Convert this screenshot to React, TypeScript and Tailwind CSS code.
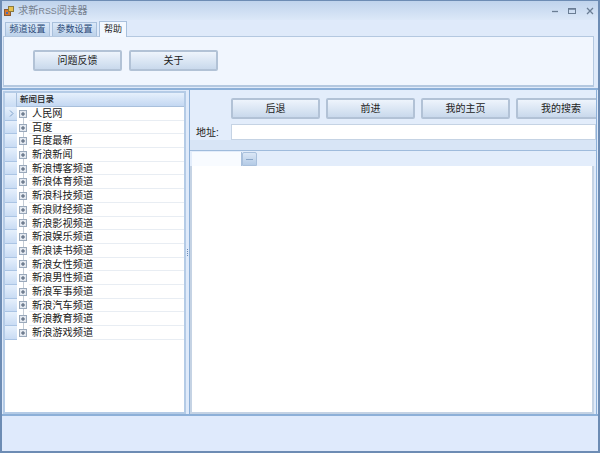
import React from 'react';

const font = { fontFamily: '"Liberation Sans", "Noto Sans CJK SC", sans-serif' };

const feeds = [
  '人民网', '百度', '百度最新', '新浪新闻', '新浪博客频道', '新浪体育频道', '新浪科技频道', '新浪财经频道',
  '新浪影视频道', '新浪娱乐频道', '新浪读书频道', '新浪女性频道', '新浪男性频道', '新浪军事频道', '新浪汽车频道',
  '新浪教育频道', '新浪游戏频道',
];

function RibbonButton({ label, width }: { label: string; width: string }) {
  return (
    <div className={`${width} h-[21px] shrink-0 flex items-center justify-center rounded-[2px] border-2 border-[#b2c2d6] bg-gradient-to-b from-[#eef4fc] to-[#c9d9ec] text-[10px] text-[#222]`}>
      {label}
    </div>
  );
}

function ExpandBox() {
  return (
    <svg width="8" height="8" viewBox="0 0 8 8" className="shrink-0">
      <rect x="0.5" y="0.5" width="7" height="7" fill="#e4e9f0" stroke="#9aa9bb" />
      <path d="M2 4h4M4 2v4" stroke="#4a5a70" />
    </svg>
  );
}

function FeedRow({ name, index }: { name: string; index: number }) {
  const isFirst = index === 0;
  const isLast = index === feeds.length - 1;
  return (
    <div className="flex h-[13.7px]">
      <div className="w-[12px] shrink-0 flex items-center justify-center border-b border-[#aac4e4] bg-gradient-to-b from-[#e6f0fc] to-[#c9dcf4]">
        {isFirst && (
          <svg width="5" height="7" viewBox="0 0 5 7">
            <path d="M1 0.5 4 3.5 1 6.5" fill="none" stroke="#7d9fc8" />
          </svg>
        )}
      </div>
      <div className="relative w-[12px] shrink-0 flex items-center justify-center">
        {isFirst ? (
          <div className="absolute left-[6px] top-[7px] bottom-0 w-px bg-[#c4ccd6]" />
        ) : isLast ? (
          <div className="absolute left-[6px] top-0 h-[7px] w-px bg-[#c4ccd6]" />
        ) : (
          <div className="absolute left-[6px] top-0 bottom-0 w-px bg-[#c4ccd6]" />
        )}
        <div className="relative flex">
          <ExpandBox />
        </div>
      </div>
      <div className="w-[155px] border-b border-[#e8edf3] pl-[3px] text-[10.2px] leading-[13px] text-[#222] whitespace-nowrap">
        {name}
      </div>
    </div>
  );
}

export default function App() {
  return (
    <div className="w-[600px] h-[453px] flex flex-col overflow-hidden border-x-2 border-b-2 border-[#6d8cb4] bg-[#dfeafa]" style={font}>
      {/* title bar */}
      <div className="h-[20px] shrink-0 flex items-center bg-gradient-to-b from-[#bfd3ec] to-[#dce8f8] border-t border-[#6d8cb4] pl-[2px]">
        <svg width="10" height="10" viewBox="0 0 10 10" className="shrink-0">
          <rect x="0.5" y="3.5" width="6" height="6" fill="#d9782f" stroke="#8a5a30" />
          <rect x="4.5" y="0.5" width="5" height="5" fill="#e8c14e" stroke="#8a7a40" />
          <rect x="2" y="6" width="2" height="2" fill="#4a6fb0" />
        </svg>
        <span className="ml-[4px] text-[10.3px] text-[#76808e]">
          求新<span className="text-[8.8px]">RSS</span>阅读器
        </span>
        <div className="ml-auto flex items-center gap-[10px] pr-[4px] text-[#6a7d94]">
          <svg width="6" height="7" viewBox="0 0 6 7"><path d="M0 4.5h6" stroke="currentColor" strokeWidth="1.3" /></svg>
          <svg width="8" height="8" viewBox="0 0 8 8"><rect x="0.5" y="1.5" width="7" height="5" fill="none" stroke="currentColor" /><path d="M0 2h8" stroke="currentColor" strokeWidth="1.5" /></svg>
          <svg width="8" height="8" viewBox="0 0 8 8"><path d="M1 1 7 7M7 1 1 7" stroke="currentColor" strokeWidth="1.3" /></svg>
        </div>
      </div>

      {/* ribbon tabs */}
      <div className="h-[16px] shrink-0 flex items-end pl-[3px] gap-[2px]">
        <div className="h-[14px] w-[45px] flex items-center justify-center bg-gradient-to-b from-[#dbe8f8] to-[#bdd2ea] border border-b-0 border-[#a9c0dc] text-[9px] text-[#2b4a78]">频道设置</div>
        <div className="h-[14px] w-[45px] flex items-center justify-center bg-gradient-to-b from-[#dbe8f8] to-[#bdd2ea] border border-b-0 border-[#a9c0dc] text-[9px] text-[#2b4a78]">参数设置</div>
        <div className="relative z-10 h-[16px] w-[28px] -mb-px flex items-center justify-center bg-[#f3f8ff] border border-b-0 border-[#a9c0dc] text-[9px] text-[#222]">帮助</div>
      </div>
      <div className="h-[51px] shrink-0 ml-[1px] mr-[4px] flex items-center gap-[7px] pl-[29px] pb-[1px] bg-[#f1f6fe] border border-b-2 border-[#b4c8e0]">
        <RibbonButton label="问题反馈" width="w-[89px]" />
        <RibbonButton label="关于" width="w-[89px]" />
      </div>

      {/* main */}
      <div className="h-[326px] shrink-0 mt-[1px] flex border-t-2 border-[#8db0d8] pl-[1px] pr-[1px]">
        {/* feed tree */}
        <div className="w-[183px] mt-[1px] shrink-0 bg-white border-2 border-[#b4cbe6]">
          <div className="flex h-[14px]">
            <div className="w-[12px] shrink-0 border-r border-[#a9c0dc] bg-gradient-to-b from-[#e6f0fc] to-[#c9dcf4]" />
            <div className="flex-1 pl-[3px] bg-gradient-to-b from-[#e6f0fc] to-[#c4d8f2] border-b border-[#a9c0dc] text-[8.5px] leading-[13px] font-medium text-[#222]">新闻目录</div>
          </div>
          {feeds.map((name, i) => (
            <FeedRow key={name} name={name} index={i} />
          ))}
        </div>

        {/* splitter */}
        <div className="w-[3px] shrink-0 flex flex-col items-center justify-center gap-px">
          {[0, 1, 2, 3].map((n) => (
            <div key={n} className="w-px h-px bg-[#6d8cb4]" />
          ))}
        </div>

        {/* browser pane */}
        <div className="flex-1 min-w-0 flex flex-col overflow-hidden border-x border-[#8db0d8]">
          <div className="h-[50px] shrink-0 bg-[#e3edfb]">
            <div className="flex gap-[6px] pl-[41px] pt-[8px] w-[500px]">
              <RibbonButton label="后退" width="w-[89px]" />
              <RibbonButton label="前进" width="w-[89px]" />
              <RibbonButton label="我的主页" width="w-[89px]" />
              <RibbonButton label="我的搜索" width="w-[90px]" />
            </div>
            <div className="flex items-center mt-[5px]">
              <span className="w-[41px] pl-[6px] shrink-0 text-[10px] text-[#222]">地址:</span>
              <div className="flex-1 h-[16px] bg-white border border-[#c5d3e4]" />
            </div>
          </div>
          <div className="h-[11px] shrink-0 bg-[#d8e5f6] border-b border-[#9fbbdc]" />
          <div className="h-[15px] shrink-0 flex items-end pl-[2px] bg-[#e3edfb]">
            <div className="w-[50px] h-[14px] bg-[#f8fbff] border-r border-[#a9c0dc]" />
            <div className="w-[15px] h-[14px] rounded-t-[2px] border border-[#a9c0dc] bg-gradient-to-b from-[#dbe7f6] to-[#b4cbe6] flex items-center justify-center">
              <div className="w-[7px] h-px bg-[#8aa6c8]" />
            </div>
          </div>
          <div className="flex-1 mr-[2px] bg-white border-2 border-t-0 border-[#c5d3e4]" />
        </div>
      </div>

      {/* status area */}
      <div className="flex-1 bg-[#dfeafc] border-t-2 border-[#8db0d8]" />
    </div>
  );
}
